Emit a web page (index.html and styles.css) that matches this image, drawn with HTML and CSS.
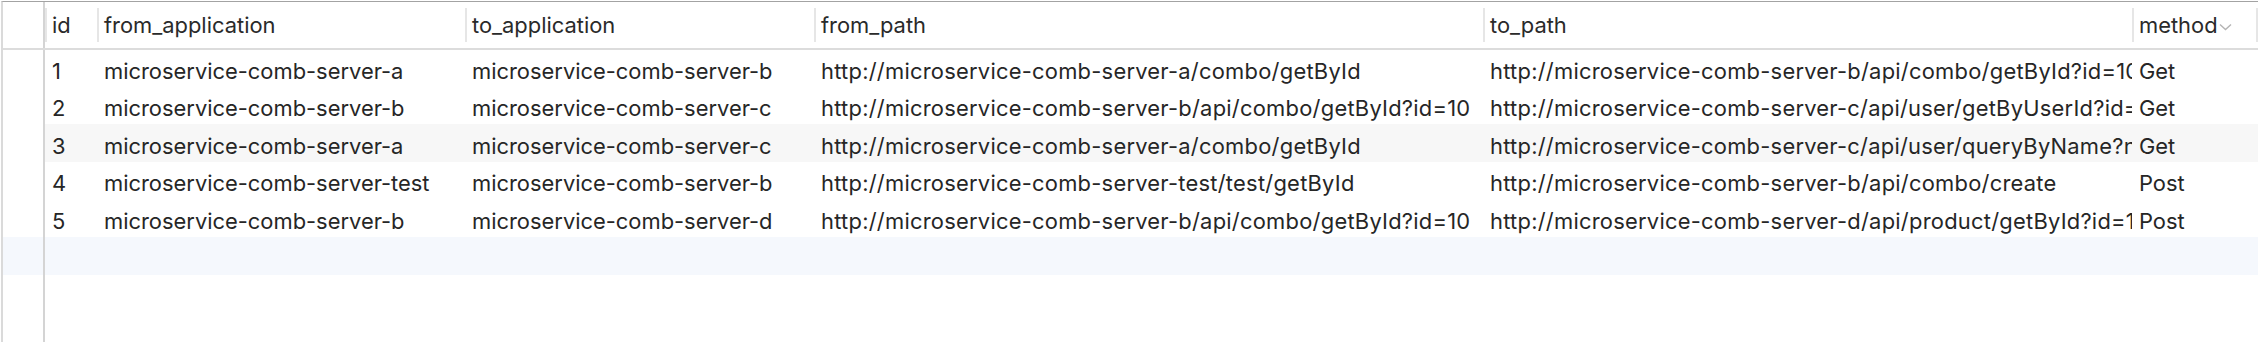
FILE: index.html
```html
<!DOCTYPE html>
<html lang="en">
<head>
  <meta charset="UTF-8" />
  <title>service_call</title>
  <link rel="stylesheet" href="styles.css">
</head>
<body>
  <div class="grid">
    <table>
      <colgroup>
        <col class="c-gutter">
        <col class="c-id">
        <col class="c-from-app">
        <col class="c-to-app">
        <col class="c-from-path">
        <col class="c-to-path">
        <col class="c-method">
      </colgroup>
      <thead>
        <tr>
          <th class="gutter"></th>
          <th><div class="head">id</div></th>
          <th><div class="head">from_application</div></th>
          <th><div class="head">to_application</div></th>
          <th><div class="head">from_path</div></th>
          <th><div class="head">to_path</div></th>
          <th class="last">
            <div class="head">method<svg class="sort" width="13" height="8" viewBox="0 0 13 8"><path d="M1 1.5l5.5 5 5.5-5" fill="none" stroke="#b4b4b4" stroke-width="1.4"/></svg></div>
          </th>
        </tr>
      </thead>
      <tbody>
        <tr>
          <td class="gutter"></td>
          <td>1</td>
          <td>microservice-comb-server-a</td>
          <td>microservice-comb-server-b</td>
          <td class="path">http://microservice-comb-server-a/combo/getById</td>
          <td class="path">http://microservice-comb-server-b/api/combo/getById?id=10</td>
          <td>Get</td>
        </tr>
        <tr>
          <td class="gutter"></td>
          <td>2</td>
          <td>microservice-comb-server-b</td>
          <td>microservice-comb-server-c</td>
          <td class="path">http://microservice-comb-server-b/api/combo/getById?id=10</td>
          <td class="path">http://microservice-comb-server-c/api/user/getByUserId?id=1</td>
          <td>Get</td>
        </tr>
        <tr class="alt">
          <td class="gutter"></td>
          <td>3</td>
          <td>microservice-comb-server-a</td>
          <td>microservice-comb-server-c</td>
          <td class="path">http://microservice-comb-server-a/combo/getById</td>
          <td class="path">http://microservice-comb-server-c/api/user/queryByName?name=a</td>
          <td>Get</td>
        </tr>
        <tr>
          <td class="gutter"></td>
          <td>4</td>
          <td>microservice-comb-server-test</td>
          <td>microservice-comb-server-b</td>
          <td class="path">http://microservice-comb-server-test/test/getById</td>
          <td class="path">http://microservice-comb-server-b/api/combo/create</td>
          <td>Post</td>
        </tr>
        <tr>
          <td class="gutter"></td>
          <td>5</td>
          <td>microservice-comb-server-b</td>
          <td>microservice-comb-server-d</td>
          <td class="path">http://microservice-comb-server-b/api/combo/getById?id=10</td>
          <td class="path">http://microservice-comb-server-d/api/product/getById?id=1</td>
          <td>Post</td>
        </tr>
        <tr class="new-row">
          <td class="gutter"></td>
          <td></td><td></td><td></td><td></td><td></td><td></td>
        </tr>
        <tr class="filler">
          <td class="gutter"></td>
          <td></td><td></td><td></td><td></td><td></td><td></td>
        </tr>
      </tbody>
    </table>
  </div>
</body>
</html>
```

FILE: styles.css
```css
body {
  margin: 0;
  background: #ffffff;
  font-family: Inter, "Noto Sans", sans-serif;
  color: #262626;
}

.grid {
  margin-top: 1px;
  margin-left: 1px;
  border-top: 1px solid #a3a3a3;
  border-left: 2px solid #dadada;
  height: 340px;
  overflow: hidden;
}

table {
  width: 2255px;
  table-layout: fixed;
  border-collapse: collapse;
}

.c-gutter { width: 41px; }
.c-id { width: 53px; }
.c-from-app { width: 368px; }
.c-to-app { width: 349px; }
.c-from-path { width: 669px; }
.c-to-path { width: 649px; }
.c-method { width: 126px; }

th {
  height: 46px;
  padding: 0;
  font-weight: normal;
  text-align: left;
  border-bottom: 2px solid #dcdcdc;
}

.head {
  display: flex;
  align-items: center;
  height: 34px;
  padding-left: 5px;
  border-left: 2px solid #e6e6e6;
  font-size: 21.9px;
  color: #2a2a2a;
  white-space: nowrap;
  overflow: hidden;
}

.last .head {
  border-right: 2px solid #e6e6e6;
}

.sort {
  flex: none;
  margin-left: 1px;
  margin-top: 4px;
}

.gutter {
  border-right: 2px solid #d4d4d4;
}

tbody tr {
  height: 37.7px;
}

td {
  padding: 5px 7px 0 7px;
  font-size: 21.9px;
  line-height: 28px;
  white-space: nowrap;
  overflow: hidden;
  text-overflow: clip;
}

td.path {
  letter-spacing: 0.25px;
}

td.gutter {
  padding: 0;
}

.alt td:not(.gutter) {
  background: #f7f7f7;
}

.new-row td {
  background: #f5f8fd;
}

tbody tr.filler {
  height: 70px;
}
```
